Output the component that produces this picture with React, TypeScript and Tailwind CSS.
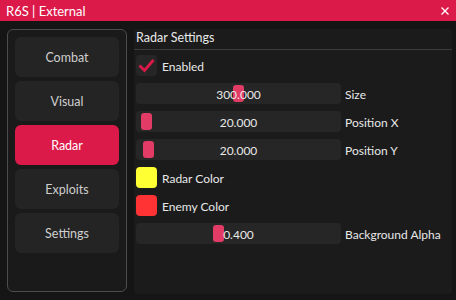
import { useState } from "react";

const tabs = ["Combat", "Visual", "Radar", "Exploits", "Settings"];

const sliders = [
  { value: "300.000", label: "Size", grab: 97 },
  { value: "20.000", label: "Position X", grab: 5 },
  { value: "20.000", label: "Position Y", grab: 7 },
];

function Slider({ value, grab, label }: { value: string; grab: number; label: string }) {
  return (
    <div className="flex items-center h-[21px]">
      <div className="relative w-[205px] h-[21px] rounded-[4px] bg-[#262626] flex items-center justify-center text-[#e8e8e8]">
        <div
          className="absolute top-[2px] w-[11px] h-[17px] rounded-[3px] bg-[#e23c66]"
          style={{ left: grab }}
        />
        <span className="relative pt-[2px]">{value}</span>
      </div>
      <span className="ml-[4px] pt-[2px] text-[#e8e8e8]">{label}</span>
    </div>
  );
}

export default function App() {
  const [active, setActive] = useState("Radar");

  return (
    <div
      className="w-[456px] h-[300px] bg-[#151515] flex flex-col overflow-hidden text-[12px] leading-none"
      style={{ fontFamily: 'Lato, "Noto Sans", sans-serif' }}
    >
      {/* Title bar */}
      <div className="h-[21px] bg-[#dc1a4a] flex items-center justify-between pl-[6px] pr-[7px] shrink-0">
        <span className="text-white text-[13px] pt-[1px]">R6S | External</span>
        <svg width="8" height="8" viewBox="0 0 8 8" className="text-white">
          <path d="M0.5 0.5 L7.5 7.5 M7.5 0.5 L0.5 7.5" stroke="currentColor" strokeWidth="1.3" />
        </svg>
      </div>

      <div className="flex flex-1 pt-[8px] pl-[7px] pr-[4px] pb-[8px] gap-[7px]">
        {/* Sidebar */}
        <div className="w-[120px] border border-[#4d4d4d] rounded-[6px] bg-[#1a1a1a] flex flex-col gap-[4px] px-[7px] pt-[7px]">
          {tabs.map((tab) => (
            <button
              key={tab}
              onClick={() => setActive(tab)}
              className={`h-[40px] rounded-[6px] text-[12.5px] pt-[2px] ${
                active === tab ? "bg-[#dc1a4a] text-white" : "bg-[#242424] text-[#cfcfcf]"
              }`}
            >
              {tab}
            </button>
          ))}
        </div>

        {/* Content */}
        <div className="flex-1 bg-[#1b1b1b] rounded-[4px] mb-[-2px] flex flex-col">
          <div className="h-[20px] pl-[2px] pb-[1px] flex items-center text-[12.5px] text-[#e8e8e8]">Radar Settings</div>
          <div className="h-px bg-[#3b3b3b]" />
          <div className="flex flex-col gap-[7px] pl-[2px] pt-[5px]">
            <div className="flex items-center h-[21px]">
              <div className="w-[21px] h-[21px] rounded-[4px] bg-[#262626] flex items-center justify-center">
                <svg width="17" height="15" viewBox="0 0 17 15">
                  <path d="M1.5 7.5 L6.5 12.5 L15.5 2" fill="none" stroke="#dc1a4a" strokeWidth="2.8" />
                </svg>
              </div>
              <span className="ml-[5px] pt-[2px] text-[#e8e8e8]">Enabled</span>
            </div>

            {sliders.map((s) => (
              <Slider key={s.label} {...s} />
            ))}

            <div className="flex items-center h-[21px]">
              <div className="w-[21px] h-[21px] rounded-[4px] bg-[#ffff33]" />
              <span className="ml-[5px] pt-[2px] text-[#e8e8e8]">Radar Color</span>
            </div>
            <div className="flex items-center h-[21px]">
              <div className="w-[21px] h-[21px] rounded-[4px] bg-[#ff3333]" />
              <span className="ml-[5px] pt-[2px] text-[#e8e8e8]">Enemy Color</span>
            </div>

            <Slider value="0.400" label="Background Alpha" grab={77} />
          </div>
        </div>
      </div>
    </div>
  );
}
